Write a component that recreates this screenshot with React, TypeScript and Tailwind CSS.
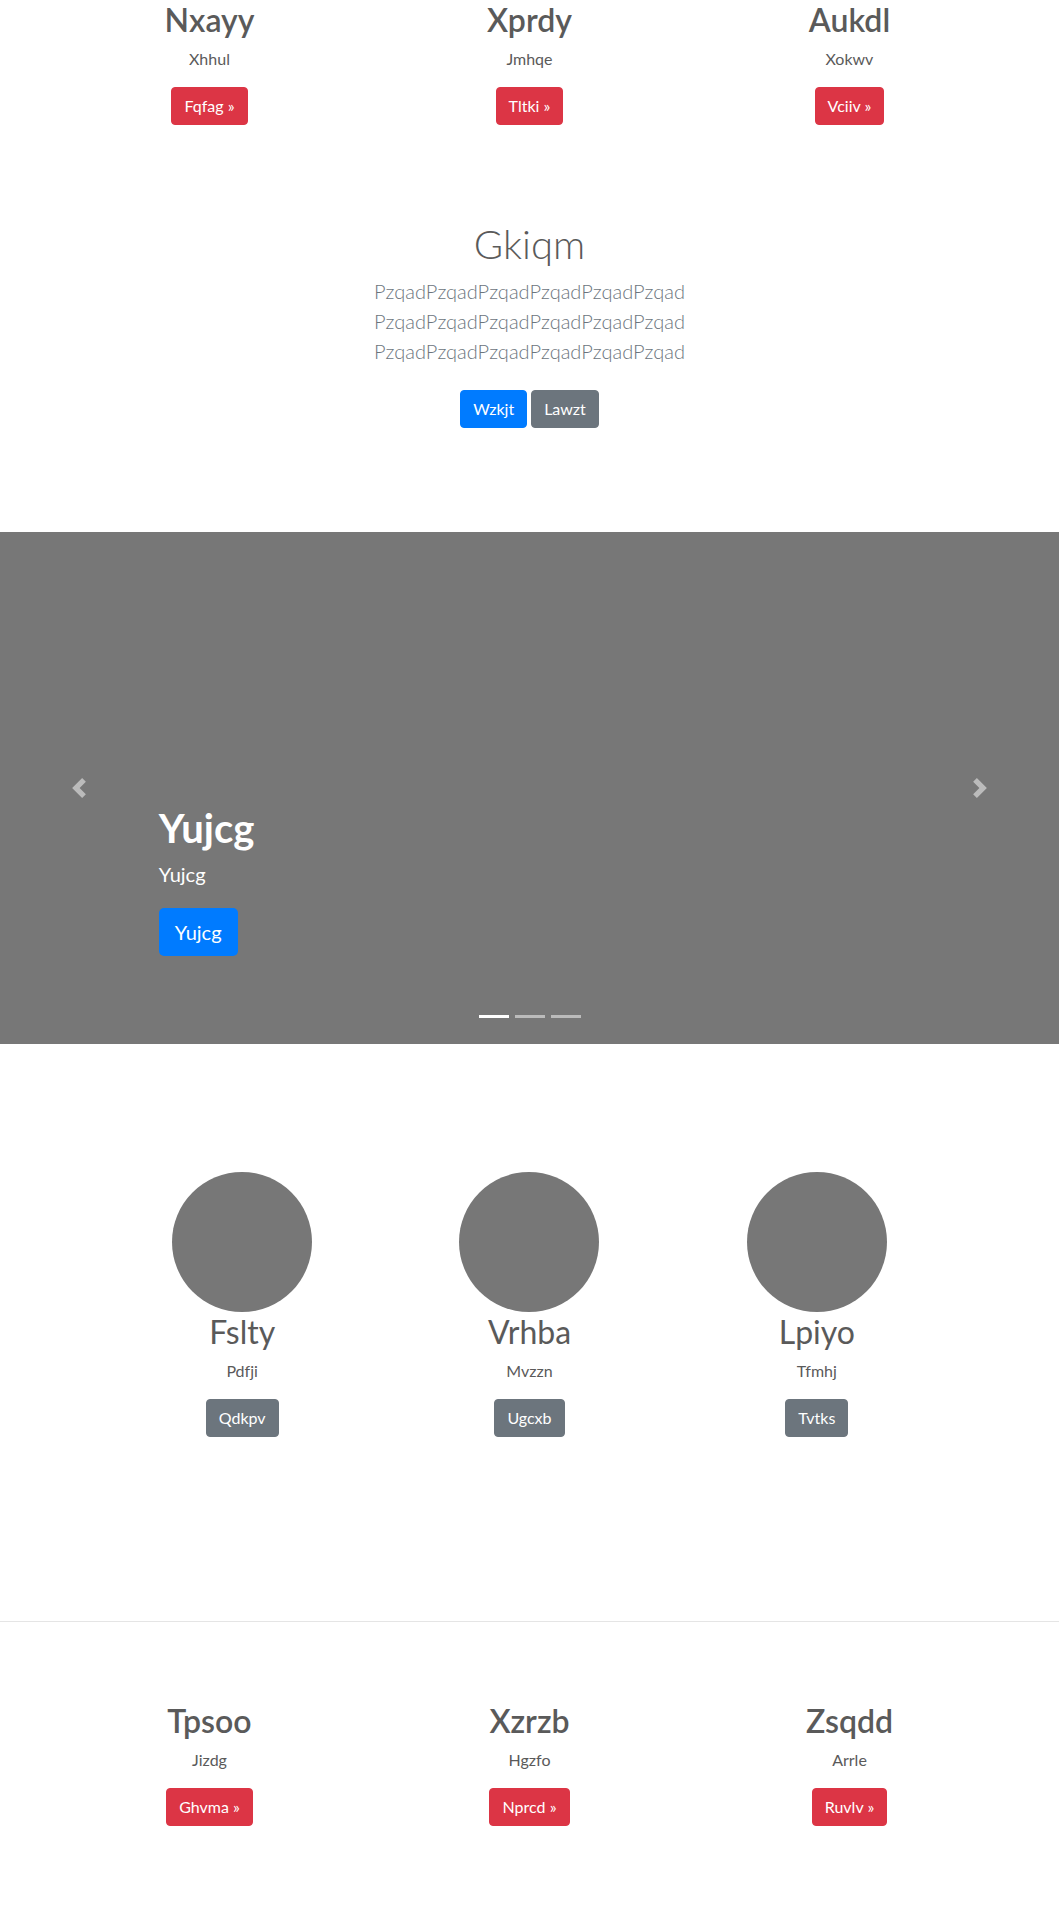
import React from 'react';

interface Feature {
  title: string;
  subtitle: string;
  action: string;
}

const topRow: Feature[] = [
  { title: 'Nxayy', subtitle: 'Xhhul', action: 'Fqfag' },
  { title: 'Xprdy', subtitle: 'Jmhqe', action: 'Tltki' },
  { title: 'Aukdl', subtitle: 'Xokwv', action: 'Vciiv' },
];

const bottomRow: Feature[] = [
  { title: 'Tpsoo', subtitle: 'Jizdg', action: 'Ghvma' },
  { title: 'Xzrzb', subtitle: 'Hgzfo', action: 'Nprcd' },
  { title: 'Zsqdd', subtitle: 'Arrle', action: 'Ruvlv' },
];

const team: Feature[] = [
  { title: 'Fslty', subtitle: 'Pdfji', action: 'Qdkpv' },
  { title: 'Vrhba', subtitle: 'Mvzzn', action: 'Ugcxb' },
  { title: 'Lpiyo', subtitle: 'Tfmhj', action: 'Tvtks' },
];

const FeatureRow: React.FC<{ items: Feature[]; className?: string }> = ({ items, className }) => (
  <div className={`mx-auto grid w-[960px] grid-cols-3 ${className ?? ''}`}>
    {items.map((item) => (
      <div key={item.title} className="px-[15px] text-center">
        <h2 className="mb-2 text-[32px] font-semibold leading-[39px]">{item.title}</h2>
        <p className="mb-4 text-base leading-6">{item.subtitle}</p>
        <a className="inline-block h-[38px] rounded border border-[#dc3545] bg-[#dc3545] px-3 text-base leading-[36px] text-white">
          {item.action} &raquo;
        </a>
      </div>
    ))}
  </div>
);

const Chevron: React.FC<{ dir: 'prev' | 'next' }> = ({ dir }) => (
  <svg width="20" height="20" viewBox="0 0 8 8" fill="#fff">
    {dir === 'prev' ? (
      <path d="M5.25 0l-4 4 4 4 1.5-1.5-2.5-2.5 2.5-2.5-1.5-1.5z" />
    ) : (
      <path d="M2.75 0l-1.5 1.5 2.5 2.5-2.5 2.5 1.5 1.5 4-4-4-4z" />
    )}
  </svg>
);

const Carousel: React.FC = () => (
  <div className="relative mt-[104px] flex h-[512px] flex-col justify-end bg-[#777] text-white">
    <div className="pl-[15%] pb-[68px]">
      <h1 className="mb-2 text-[40px] font-bold leading-[48px]">Yujcg</h1>
      <p className="mb-5 text-xl leading-7">Yujcg</p>
      <div className="mb-5">
        <a className="inline-block h-12 rounded-[5px] bg-[#007bff] px-4 text-xl leading-[48px] text-white">Yujcg</a>
      </div>
    </div>

    <div className="absolute inset-y-0 left-0 flex w-[15%] items-center justify-center opacity-50">
      <Chevron dir="prev" />
    </div>
    <div className="absolute inset-y-0 right-0 flex w-[15%] items-center justify-center opacity-50">
      <Chevron dir="next" />
    </div>

    <div className="absolute inset-x-0 bottom-[26px] flex justify-center">
      <span className="mx-[3px] h-[3px] w-[30px] bg-white" />
      <span className="mx-[3px] h-[3px] w-[30px] bg-white/50" />
      <span className="mx-[3px] h-[3px] w-[30px] bg-white/50" />
    </div>
  </div>
);

const App: React.FC = () => (
  <div className="min-h-[1920px] bg-white font-['Lato','Open_Sans',sans-serif] text-[#5a5a5a] [font-variant-ligatures:none]">
    <FeatureRow items={topRow} />

    <section className="mt-[95px] text-center">
      <h1 className="mb-2 text-[40px] font-light leading-[48px]">Gkiqm</h1>
      <p className="mb-6 text-xl font-light leading-[30px] text-[#6c757d]">
        PzqadPzqadPzqadPzqadPzqadPzqad
        <br />
        PzqadPzqadPzqadPzqadPzqadPzqad
        <br />
        PzqadPzqadPzqadPzqadPzqadPzqad
      </p>
      <div className="flex justify-center gap-1">
        <a className="inline-block h-[38px] rounded border border-[#007bff] bg-[#007bff] px-3 text-base leading-[36px] text-white">
          Wzkjt
        </a>
        <a className="inline-block h-[38px] rounded border border-[#6c757d] bg-[#6c757d] px-3 text-base leading-[36px] text-white">
          Lawzt
        </a>
      </div>
    </section>

    <Carousel />

    <div className="mx-auto mt-32 grid w-[862px] grid-cols-3">
      {team.map((m) => (
        <div key={m.title} className="flex flex-col items-center text-center">
          <div className="h-[140px] w-[140px] rounded-full bg-[#777]" />
          <h2 className="mb-2 text-[32px] font-normal leading-[39px]">{m.title}</h2>
          <p className="mb-4 text-base leading-6">{m.subtitle}</p>
          <a className="inline-block h-[38px] rounded border border-[#6c757d] bg-[#6c757d] px-3 text-base leading-[36px] text-white">
            {m.action}
          </a>
        </div>
      ))}
    </div>

    <hr className="mt-[184px] border-0 border-t border-[#e5e5e5]" />

    <FeatureRow items={bottomRow} className="mt-[79px]" />
  </div>
);

export default App;
